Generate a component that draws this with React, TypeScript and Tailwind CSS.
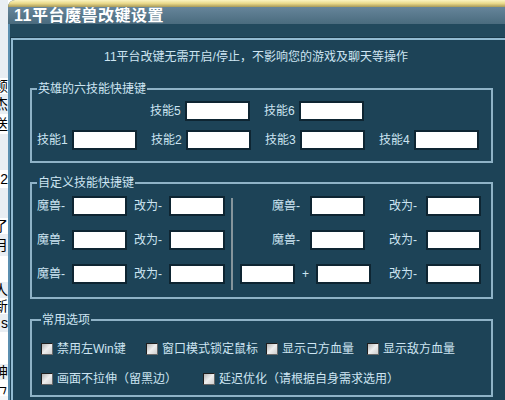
const sideChars: [number, string][] = [
  [78, ""],
  [16, "顿"],
  [20, "杰"],
  [20, "送"],
  [36, ""],
  [18, "2"],
  [30, ""],
  [16, "了"],
  [22, "月"],
  [26, ""],
  [16, "人"],
  [16, "新"],
  [18, "s"],
  [32, ""],
  [16, "神"],
  [16, "ㄣ"],
];

function Input({ w }: { w: string }) {
  return <div className={`h-[20px] ${w} border-2 border-[#0e2532] bg-white shrink-0`} />;
}

function Box({ label }: { label: string }) {
  return (
    <div className="flex items-center">
      <span className="w-[12px] h-[12px] border border-t-[#1e1e1e] border-l-[#1e1e1e] border-r-[#6a6a6a] border-b-[#6a6a6a] bg-gradient-to-br from-[#b4b4b4] via-[#eeeeee] to-[#d0d0d0] shrink-0" />
      <span className="ml-[4px] whitespace-nowrap">{label}</span>
    </div>
  );
}

export default function App() {
  const skillRow2 = ["技能1", "技能2", "技能3", "技能4"];

  return (
    <div className="w-[505px] h-[400px] overflow-hidden flex bg-white text-[12px] leading-[16px] font-['Liberation_Sans','Noto_Sans_CJK_SC',sans-serif]">
      {/* page behind the dialog */}
      <div className="w-[8px] shrink-0 flex flex-col text-[14px] text-black bg-[#f3f6f9]">
        {sideChars.map(([h, c], idx) => (
          <div
            key={idx}
            className={`flex justify-end items-center overflow-hidden ${idx % 2 ? "bg-white" : "bg-[#e9eef3]"}`}
            style={{ height: h }}
          >
            <span className="whitespace-nowrap">{c}</span>
          </div>
        ))}
      </div>

      <div className="flex-1 flex flex-col bg-[#1d4357] rounded-tl-[7px] overflow-hidden">
        <div className="h-[7px] shrink-0 bg-gradient-to-b from-[#fbf4c0] via-[#e8d88a] to-[#a89a58]" />
        <div className="h-[17px] shrink-0 bg-gradient-to-b from-[#66859a] to-[#4a6b7e] pl-[6px] flex items-center">
          <span className="text-white font-bold text-[16px] leading-[17px] tracking-[0.5px]">11平台魔兽改键设置</span>
        </div>
        <div className="flex-1 flex flex-col border-l-2 border-[#5b8fb0]">
          <div className="h-[14px] shrink-0 bg-[#22495d] border-b border-[#19394a]" />

          <div className="flex-1 ml-[1px] border-t-2 border-l-2 border-[#93bbd2] text-[#cde5f2]">
            <div className="pt-[9px] text-center pr-[6px]">11平台改键无需开启/停止，不影响您的游戏及聊天等操作</div>

            <fieldset className="mt-[16px] ml-[17px] w-[463px] border-2 border-[#8fb3c7] pl-[5px] pt-[4px] pb-[11px]">
              <legend className="px-[1px]">英雄的六技能快捷键</legend>
              <div className="flex ml-[113px] gap-[14px]">
                {["技能5", "技能6"].map((t) => (
                  <div key={t} className="flex items-center w-[100px]">
                    <span className="w-[35px]">{t}</span>
                    <Input w="w-[65px]" />
                  </div>
                ))}
              </div>
              <div className="flex mt-[9px] gap-[14px]">
                {skillRow2.map((t) => (
                  <div key={t} className="flex items-center w-[100px]">
                    <span className="w-[35px]">{t}</span>
                    <Input w="w-[65px]" />
                  </div>
                ))}
              </div>
            </fieldset>

            <fieldset className="mt-[12px] ml-[17px] w-[463px] border-2 border-[#8fb3c7] pl-[5px] pt-[5px] pb-[11px]">
              <legend className="px-[1px]">自定义技能快捷键</legend>
              <div className="flex">
                <div className="flex flex-col gap-[14px] w-[194px]">
                  {[0, 1, 2].map((r) => (
                    <div key={r} className="flex items-center">
                      <span className="w-[35px]">魔兽-</span>
                      <Input w="w-[55px]" />
                      <span className="w-[35px] ml-[7px]">改为-</span>
                      <Input w="w-[56px]" />
                    </div>
                  ))}
                </div>
                <div className="w-[2px] h-[92px] mt-[2px] -mb-[4px] bg-[#85959c]" />
                <div className="flex flex-col gap-[14px]">
                  {[0, 1].map((r) => (
                    <div key={r} className="flex items-center">
                      <span className="w-[38px] ml-[39px]">魔兽-</span>
                      <Input w="w-[55px]" />
                      <span className="w-[37px] ml-[24px]">改为-</span>
                      <Input w="w-[55px]" />
                    </div>
                  ))}
                  <div className="flex items-center">
                    <div className="ml-[7px]">
                      <Input w="w-[55px]" />
                    </div>
                    <span className="w-[21px] text-center">+</span>
                    <Input w="w-[55px]" />
                    <span className="w-[37px] ml-[18px]">改为-</span>
                    <Input w="w-[55px]" />
                  </div>
                </div>
              </div>
            </fieldset>

            <fieldset className="mt-[13px] ml-[17px] w-[463px] border-2 border-[#8fb3c7] pl-[9px] pt-[13px] pb-[8px]">
              <legend className="px-[1px]">常用选项</legend>
              <div className="flex">
                <div className="w-[105px]">
                  <Box label="禁用左Win键" />
                </div>
                <div className="w-[120px]">
                  <Box label="窗口模式锁定鼠标" />
                </div>
                <div className="w-[101px]">
                  <Box label="显示己方血量" />
                </div>
                <Box label="显示敌方血量" />
              </div>
              <div className="flex mt-[14px]">
                <div className="w-[162px]">
                  <Box label="画面不拉伸（留黑边）" />
                </div>
                <Box label="延迟优化（请根据自身需求选用）" />
              </div>
            </fieldset>
          </div>
        </div>
      </div>
    </div>
  );
}
